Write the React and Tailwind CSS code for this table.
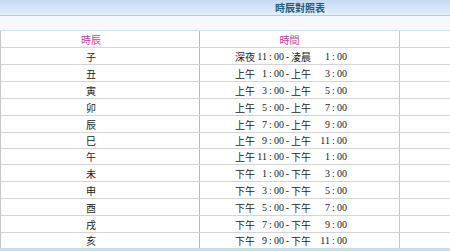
const rows = [
  ["子", "深夜", "11", "淩晨", "1", 17],
  ["丑", "上午", "1", "上午", "3", 17],
  ["寅", "上午", "3", "上午", "5", 17],
  ["卯", "上午", "5", "上午", "7", 17],
  ["辰", "上午", "7", "上午", "9", 17],
  ["巳", "上午", "9", "上午", "11", 16],
  ["午", "上午", "11", "下午", "1", 16],
  ["未", "下午", "1", "下午", "3", 17],
  ["申", "下午", "3", "下午", "5", 17],
  ["酉", "下午", "5", "下午", "7", 17],
  ["戌", "下午", "7", "下午", "9", 17],
  ["亥", "下午", "9", "下午", "11", 15],
];

const serif = { fontFamily: '"Liberation Serif", "Noto Sans CJK TC", serif' };
const cjk = { fontFamily: '"Noto Sans CJK TC", sans-serif' };

function Time({ h }) {
  return (
    <span className="flex items-center">
      <span className="w-[10px] text-right">{h}</span>
      <span className="w-[7px] text-center">:</span>
      <span className="w-[10px]">00</span>
    </span>
  );
}

export default function App() {
  return (
    <div className="w-[450px] h-[251px] bg-white overflow-hidden text-[10px] text-[#1a1a1a]" style={serif}>
      <div className="h-[15px] bg-gradient-to-b from-[#c4d9f2] to-[#e4eff9] flex items-center pl-[275px]">
        <span className="font-bold text-[10px] text-[#1d5c78]" style={cjk}>時辰對照表</span>
      </div>
      <div className="h-[1px] bg-[#b9c9d9]" />
      <div className="h-[14px] bg-[#f6f9fc]" />
      <div className="h-[1px] bg-[#cde4ec]" />
      <div className="border-l border-[#c8c8c8]">
        <div className="flex h-[17px] border-b border-[#d4d4d4] text-[#c2409a]" style={cjk}>
          <div className="w-[199px] flex items-center justify-center pr-[18px] border-r border-[#b8b8b8]">時辰</div>
          <div className="w-[200px] flex items-center justify-center pr-[20px] border-r border-[#c4c4c4]">時間</div>
          <div className="flex-1" />
        </div>
        {rows.map((r, i) => (
          <div
            key={i}
            className={`flex ${i === rows.length - 1 ? "" : "border-b border-[#d4d4d4]"}`}
            style={{ height: r[5] }}
          >
            <div className="w-[199px] flex items-center justify-center pr-[18px] border-r border-[#b8b8b8]" style={cjk}>{r[0]}</div>
            <div className="w-[200px] flex items-center pl-[35px] border-r border-[#c4c4c4]">
              <span className="w-[20px]" style={cjk}>{r[1]}</span>
              <span className="w-[2px]" />
              <Time h={r[2]} />
              <span className="w-[7px] text-center">-</span>
              <span className="w-[20px]" style={cjk}>{r[3]}</span>
              <span className="w-[9px]" />
              <Time h={r[4]} />
            </div>
            <div className="flex-1" />
          </div>
        ))}
      </div>
      <div className="h-[4px] bg-[#c6dfe9]" />
    </div>
  );
}
